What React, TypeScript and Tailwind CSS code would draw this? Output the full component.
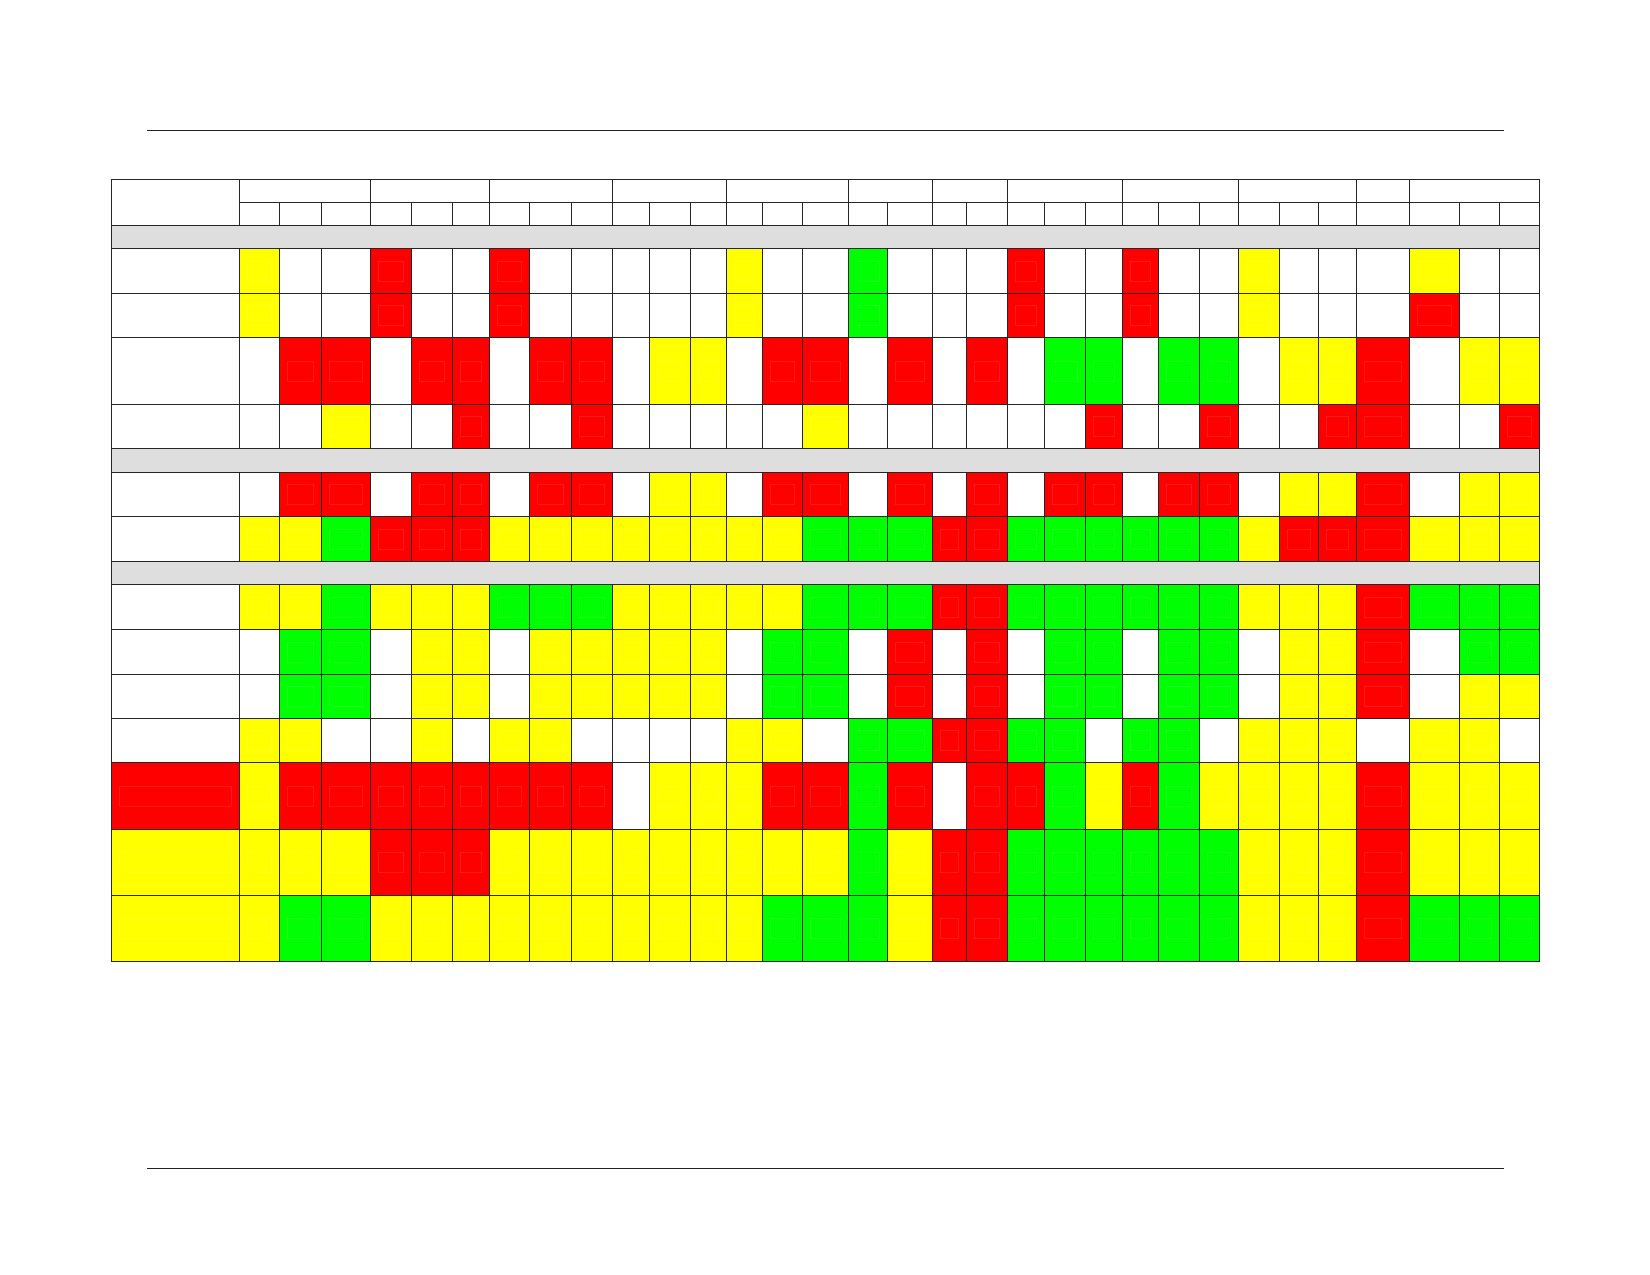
import React from "react";

// colour keys: W white, R red, Y yellow, G green
const fills: Record<string, string> = {
  W: "bg-white",
  R: "bg-[#ff0000]",
  Y: "bg-[#ffff00]",
  G: "bg-[#00ff00]",
};

// header groups: how many sub columns each one spans
const groups = [
  "col-span-3",
  "col-span-3",
  "col-span-3",
  "col-span-3",
  "col-span-3",
  "col-span-2",
  "col-span-2",
  "col-span-3",
  "col-span-3",
  "col-span-3",
  "col-span-1",
  "col-span-3",
];

type Row = { label: string; cells: string } | { section: true };

const rows: Row[] = [
  { section: true },
  { label: "W", cells: "YWWRWWRWWWWWYWWGWWWRWWRWWYWWWYWW" },
  { label: "W", cells: "YWWRWWRWWWWWYWWGWWWRWWRWWYWWWRWW" },
  { label: "W", cells: "WRRWRRWRRWYYWRRWRWRWGGWGGWYYRWYY" },
  { label: "W", cells: "WWYWWRWWRWWWWWYWWWWWWRWWRWWRRWWR" },
  { section: true },
  { label: "W", cells: "WRRWRRWRRWYYWRRWRWRWRRWRRWYYRWYY" },
  { label: "W", cells: "YYGRRRYYYYYYYYGGGRRGGGGGGYRRRYYY" },
  { section: true },
  { label: "W", cells: "YYGYYYGGGYYYYYGGGRRGGGGGGYYYRGGG" },
  { label: "W", cells: "WGGWYYWYYYYYWGGWRWRWGGWGGWYYRWGG" },
  { label: "W", cells: "WGGWYYWYYYYYWGGWRWRWGGWGGWYYRWYY" },
  { label: "W", cells: "YYWWYWYYWWWWYYWGGRRGGWGGWYYYWYYW" },
  { label: "R", cells: "YRRRRRRRRWYYYRRGRWRRGYRGYYYYRYYY" },
  { label: "Y", cells: "YYYRRRYYYYYYYYYGYRRGGGGGGYYYRYYY" },
  { label: "Y", cells: "YGGYYYYYYYYYYGGGYRRGGGGGGYYYRGGG" },
];

function Cell({ fill }: { fill: string }) {
  return (
    <div className={`${fills[fill]} flex items-center`}>
      {fill !== "W" && <div className="mx-[7px] h-[21px] flex-1 border border-white/10" />}
    </div>
  );
}

export default function App() {
  return (
    <div className="w-[1650px] h-[1275px] bg-white overflow-hidden">
      <div className="pt-[130px] pl-[147px]">
        <div className="h-px w-[1357px] bg-[#222]" />
      </div>

      <div className="mt-[48px] ml-[111px] w-fit grid grid-cols-[127px_39px_41px_48px_40px_40px_36px_39px_41px_40px_36px_40px_35px_35px_39px_45px_38px_44px_33px_40px_36px_40px_36px_35px_40px_38px_40px_38px_37px_52px_49px_39px_39px] grid-rows-[22px_22px_22px_44px_43px_66px_43px_23px_43px_44px_22px_44px_44px_43px_43px_66px_65px_65px] gap-px p-px bg-[#262626]">
        <div className="row-span-2 bg-white" />
        {groups.map((span, i) => (
          <div key={i} className={`${span} bg-white`} />
        ))}
        {Array.from({ length: 32 }).map((_, i) => (
          <div key={i} className="bg-white" />
        ))}

        {rows.map((row, r) =>
          "section" in row ? (
            <div key={r} className="col-span-33 bg-[#dedede]" />
          ) : (
            <React.Fragment key={r}>
              <Cell fill={row.label} />
              {row.cells.split("").map((c, i) => (
                <Cell key={i} fill={c} />
              ))}
            </React.Fragment>
          )
        )}
      </div>

      <div className="mt-[206px] pl-[147px]">
        <div className="h-px w-[1357px] bg-[#222]" />
      </div>
    </div>
  );
}
